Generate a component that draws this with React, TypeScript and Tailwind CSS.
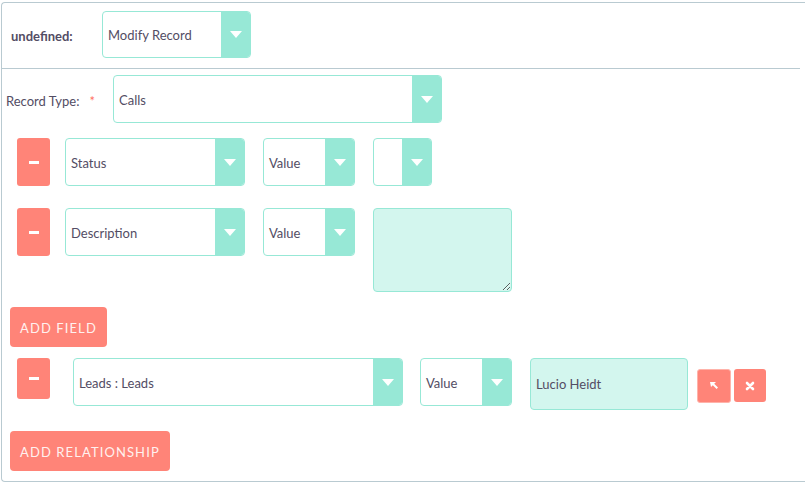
import React from "react";

const teal = "border-[#97e8d6]";

function Select({ label, className }: { label: string; className: string }) {
  return (
    <div className={`flex shrink-0 rounded-[4px] border ${teal} bg-white overflow-hidden ${className}`}>
      <div className="flex-1 flex items-center pl-[5px] pt-[3px] text-[13px] text-[#534d64] truncate">{label}</div>
      <div className="w-[29px] bg-[#97e8d6] flex items-center justify-center">
        <div className="w-0 h-0 border-l-[6px] border-r-[6px] border-t-[7px] border-l-transparent border-r-transparent border-t-white" />
      </div>
    </div>
  );
}

function Minus({ h }: { h: string }) {
  return (
    <button className={`w-[33px] ${h} shrink-0 rounded-[3px] bg-[#ff8478] flex items-center justify-center`}>
      <span className="block w-[10px] h-[3px] bg-white" />
    </button>
  );
}

function RedButton({ children }: { children: React.ReactNode }) {
  return (
    <button className="h-[40px] px-[10px] pt-[3px] rounded-[4px] bg-[#ff8478] text-[13px] tracking-[1.1px] text-[#fff1ef] uppercase">
      {children}
    </button>
  );
}

export default function App() {
  return (
    <div className="w-[805px] h-[483px] overflow-hidden bg-white" style={{ fontFamily: "Lato, 'Open Sans', sans-serif" }}>
      <div className="mt-[2px] ml-[1px] w-[820px] h-[480px] border border-r-0 border-[#b9cad1] rounded-l-[4px]">
        {/* action */}
        <div className="flex items-start pt-[8px] pl-[9px] h-[65px]">
          <div className="w-[91px] pt-[16px] text-[13px] font-bold text-[#534d64]">undefined:</div>
          <Select label="Modify Record" className="w-[149px] h-[47px]" />
        </div>
        <div className="w-[798px] border-t border-[#b9cad1]" />

        {/* record type */}
        <div className="flex items-start pt-[6px] pl-[4px]">
          <div className="w-[107px] pt-[17px] text-[13px] text-[#534d64]">
            Record Type:<span className="ml-[10px] text-[#ff6f61]">*</span>
          </div>
          <Select label="Calls" className="w-[329px] h-[48px]" />
        </div>

        {/* fields */}
        <div className="flex items-start pt-[15px] pl-[15px]">
          <Minus h="h-[48px]" />
          <Select label="Status" className="ml-[15px] w-[180px] h-[48px]" />
          <Select label="Value" className="ml-[18px] w-[92px] h-[48px]" />
          <Select label="" className="ml-[18px] w-[59px] h-[48px]" />
        </div>
        <div className="flex items-start pt-[22px] pl-[15px]">
          <Minus h="h-[48px]" />
          <Select label="Description" className="ml-[15px] w-[180px] h-[48px]" />
          <Select label="Value" className="ml-[18px] w-[92px] h-[48px]" />
          <textarea className={`ml-[18px] w-[139px] h-[84px] rounded-[4px] border ${teal} bg-[#d3f6ee] outline-none`} />
        </div>

        <div className="pt-[15px] pl-[8px]">
          <RedButton>Add Field</RedButton>
        </div>

        {/* relationship */}
        <div className="flex items-start pt-[11px] pl-[15px]">
          <Minus h="h-[41px]" />
          <Select label="Leads : Leads" className="ml-[23px] w-[330px] h-[48px]" />
          <Select label="Value" className="ml-[17px] w-[92px] h-[48px]" />
          <div className={`ml-[18px] w-[158px] h-[52px] rounded-[4px] border ${teal} bg-[#d3f6ee] flex items-center pl-[5px] pt-[2px] text-[13px] text-[#534d64]`}>
            Lucio Heidt
          </div>
          <button className="ml-[9px] mt-[11px] w-[34px] h-[34px] rounded-[3px] bg-[#ff8478] border border-[#ffb3aa] flex items-center justify-center">
            <svg width="10" height="10" viewBox="0 0 10 10">
              <path d="M1 1 L7 1 L5.2 2.8 L9 6.6 L7.6 8 L3.8 4.2 L2 6 Z" fill="white" />
            </svg>
          </button>
          <button className="ml-[3px] mt-[11px] w-[32px] h-[33px] rounded-[3px] bg-[#ff8478] flex items-center justify-center">
            <svg width="10" height="10" viewBox="0 0 10 10">
              <path d="M2 2 L8 8 M8 2 L2 8" stroke="white" strokeWidth="2.6" strokeLinecap="round" />
            </svg>
          </button>
        </div>

        <div className="pt-[21px] pl-[8px]">
          <RedButton>Add Relationship</RedButton>
        </div>
      </div>
    </div>
  );
}
